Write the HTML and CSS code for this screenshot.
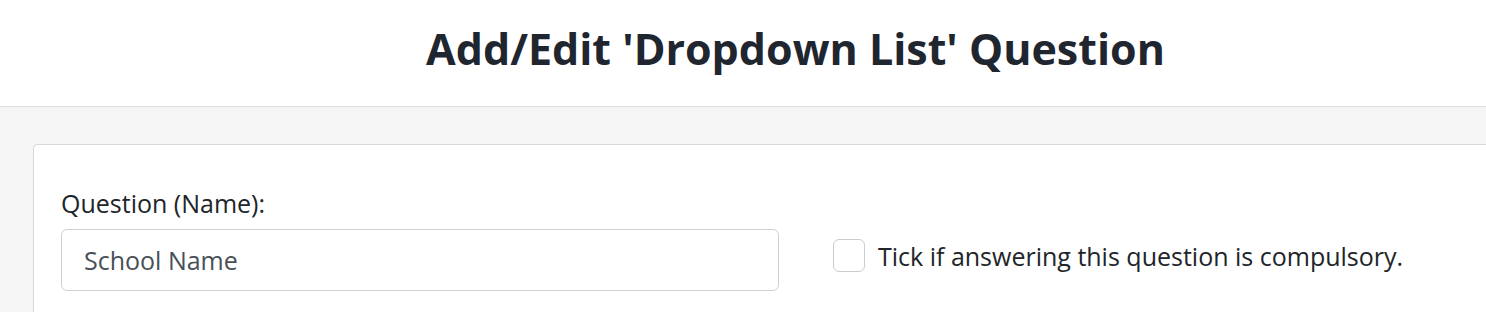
FILE: index.html
```html
<!DOCTYPE html>
<html lang="en">
<head>
<meta charset="utf-8">
<title>Add/Edit 'Dropdown List' Question</title>
<link rel="stylesheet" href="styles.css">
</head>
<body>
<header class="page-header">
  <h1 class="page-title">Add/Edit 'Dropdown List' Question</h1>
</header>
<main class="page-body">
  <section class="card">
    <div class="form-row">
      <div class="field">
        <label class="field-label" for="qname">Question (Name):</label>
        <input class="text-input" id="qname" type="text" value="School Name">
      </div>
      <label class="check">
        <span class="check-box"></span>
        <span class="check-text">Tick if answering this question is compulsory.</span>
      </label>
    </div>
    <div class="field next-field">
      <span class="field-label">Enter the list options:</span>
    </div>
  </section>
</main>
</body>
</html>
```

FILE: styles.css
```css
html, body {
  margin: 0;
  padding: 0;
}
body {
  font-family: "Open Sans", "Liberation Sans", sans-serif;
  color: #212529;
  background: #f5f5f5;
  height: 312px;
  overflow: hidden;
}
.page-header {
  background: #ffffff;
  height: 106px;
  border-bottom: 1px solid #dcdcdc;
  display: flex;
  justify-content: center;
  align-items: flex-start;
}
.page-title {
  margin: 21px 0 0 0;
  font-size: 43px;
  font-weight: 700;
  line-height: 56px;
  color: #1f2630;
  padding-left: 105px;
  white-space: nowrap;
}
.page-body {
  padding: 37px 0 0 33px;
}
.card {
  background: #ffffff;
  border: 1px solid #d6d9dc;
  border-right: none;
  border-radius: 5px 0 0 0;
  padding: 43px 0 0 27px;
}
.form-row {
  display: flex;
  align-items: flex-start;
  gap: 54px;
}
.field {
  display: flex;
  flex-direction: column;
  width: 718px;
}
.field-label {
  font-size: 25px;
  line-height: 30px;
  margin-bottom: 11px;
  color: #212529;
  white-space: nowrap;
}
.text-input {
  box-sizing: border-box;
  width: 718px;
  height: 62px;
  border: 1px solid #ccd0d4;
  border-radius: 6px;
  padding: 0 22px;
  font-family: "Open Sans", "Liberation Sans", sans-serif;
  font-size: 25px;
  color: #495057;
  background: #ffffff;
  outline: none;
}
.check {
  display: flex;
  align-items: center;
  gap: 13px;
  margin-top: 51px;
}
.check-box {
  box-sizing: border-box;
  width: 32px;
  height: 33px;
  border: 1px solid #c9cdd1;
  border-radius: 6px;
  background: #ffffff;
  flex: none;
}
.check-text {
  font-size: 25px;
  line-height: 30px;
  color: #212529;
  white-space: nowrap;
}
.next-field {
  margin-top: 15px;
}
```
